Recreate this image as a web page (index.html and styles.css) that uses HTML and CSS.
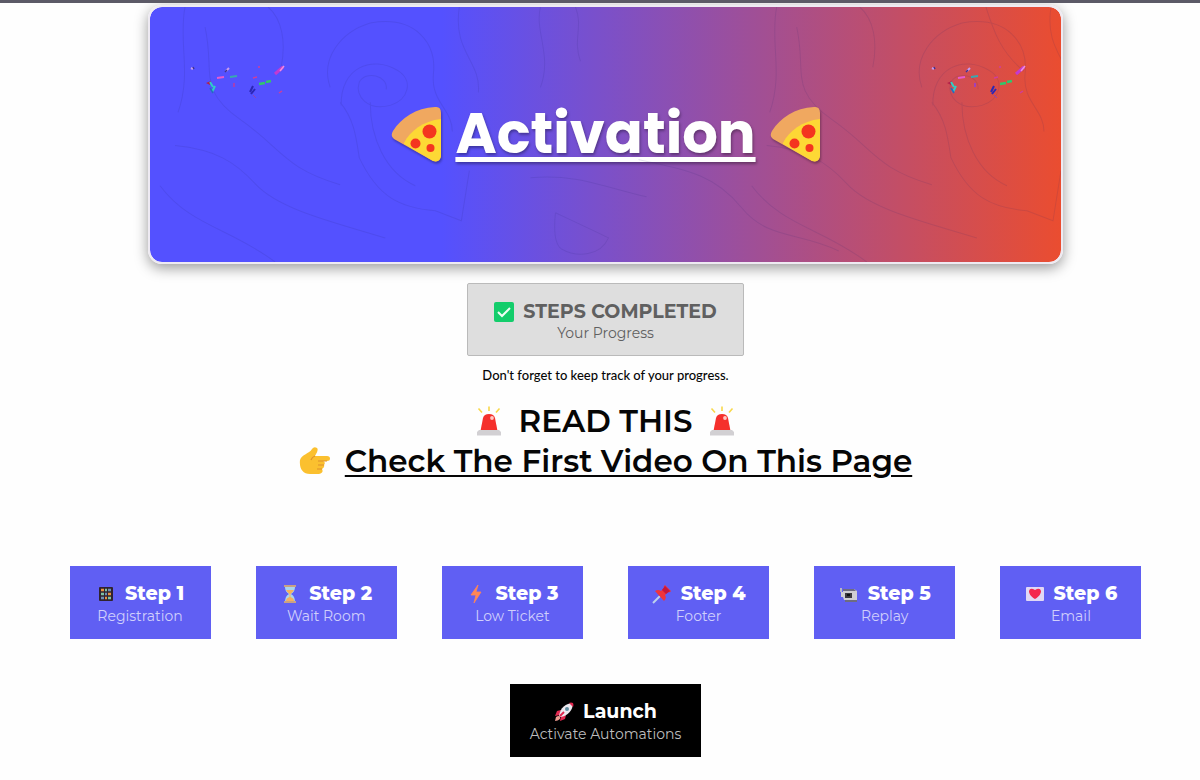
FILE: index.html
```html
<!DOCTYPE html>
<html lang="en">
<head>
	<meta charset="utf-8">
	<title>Activation</title>
	<link rel="stylesheet" href="styles.css">
</head>
<body>
	<!-- Shared drawings -->
	<svg class="defs" aria-hidden="true">
		<symbol id="pizza" viewBox="0 0 50 56">
			<path d="M2 25 C10 12 25 2 44 1 Q50 0 50 7 V50 Q49 57 42 55 L3 33 Q-1 30 2 25Z" fill="#f0a860"/>
			<path d="M13 37 C19 25 32 15 50 13 V50 Q49 57 42 55 L13 38Z" fill="#fdd835"/>
			<circle cx="38.500" cy="25.500" r="7" fill="#f4351f"/>
			<circle cx="24.500" cy="37.500" r="5" fill="#f4351f"/>
			<circle cx="39.500" cy="42" r="4" fill="#f4351f"/>
		</symbol>
		<symbol id="siren" viewBox="0 0 24 30">
			<path d="M1.500 2.500 L5 6.500 M12 0.500 V5 M22.500 2.500 L19 6.500" stroke="#f8d84a" stroke-width="1.600"/>
			<path d="M3.500 25 L6 12 Q7 8 12 8 Q17 8 18 12 L20.500 25Z" fill="#f5302c"/>
			<circle cx="15" cy="12" r="1.900" fill="#ffc7c2"/>
			<path d="M2 24 H22 L24 26 V29.500 H0 V26Z" fill="#d2d0d3"/>
		</symbol>
		<symbol id="confetti" viewBox="0 0 100 40">
			<path d="M3 3 l2 1 M38 6 l3 -3" stroke="#c79bf0" stroke-width="2"/>
			<path d="M5 2 l1 2 M37 7 l2 -2" stroke="#403290" stroke-width="1.500"/>
			<path d="M18 18 l5 -2 l-1 4z" fill="#b3204a"/>
			<path d="M22 17 l3 5 M24 27 l3 -6" stroke="#2fcfc6" stroke-width="2"/>
			<path d="M22 23 l3 5" stroke="#256bc0" stroke-width="1.500"/>
			<path d="M29 13 l7 -1" stroke="#e75ad0" stroke-width="2"/>
			<path d="M42 12 l7 -1" stroke="#38a9b0" stroke-width="2"/>
			<path d="M46 18 v4" stroke="#a33fb8" stroke-width="2"/>
			<path d="M62 27 l3 -6 M63 29 l4 -5" stroke="#2b26b5" stroke-width="2"/>
			<path d="M65 30 l3 3" stroke="#8b45b5" stroke-width="1"/>
			<path d="M65 13 l4 -1 M71 1 v2 M91 28 l3 -2" stroke="#d03e9a" stroke-width="1.500"/>
			<path d="M71 19 l6 -1 M78 17 l5 -1" stroke="#32c66b" stroke-width="2.500"/>
			<path d="M87 9 l8 -7" stroke="#c23ad2" stroke-width="3"/>
			<path d="M92 6 l4 -5" stroke="#f08ce0" stroke-width="1.500"/>
		</symbol>
	</svg>

	<main class="page">
		<header class="banner">
			<svg class="contours" viewBox="0 0 910 254" preserveAspectRatio="none" aria-hidden="true">
				<g id="lines">
					<path d="M35 0 C28 35 42 65 28 105"/>
					<path d="M10 178 C40 218 80 220 125 254"/>
					<path d="M25 138 C65 142 85 154 105 176 S165 210 235 230"/>
					<path d="M118 0 C132 12 136 35 131 60"/>
					<path d="M191 98 C190 60 222 48 247 63 C264 73 258 93 240 98 C218 104 204 89 209 75 C215 63 238 68 236 82"/>
					<path d="M190 95 C204 112 206 130 209 150 C228 190 250 200 285 203 L311 213 L319 163"/>
					<path d="M220 95 C220 130 235 165 265 178"/>
					<path d="M180 80 C170 52 190 25 220 16 C265 8 287 36 283 68 C281 95 302 102 302 124"/>
					<path d="M55 20 C65 65 47 82 90 112 S133 160 190 177"/>
					<path d="M309 0 C302 45 331 54 328 85"/>
					<path d="M405 205 C420 212 448 225 458 230 C450 248 427 250 411 241 Q402 235 405 205"/>
				</g>
				<use href="#lines" x="591"/>
				<path d="M488 152 C540 163 565 168 591 200 S650 224 688 243"/>
				<path d="M390 0 C384 25 402 48 390 80 M425 0 C433 20 422 32 430 54"/>
				<path d="M380 170 C430 166 453 180 496 189"/>
				<path d="M835 0 C843 25 850 45 873 64"/>
			</svg>
			<svg class="confetti confetti-left" aria-hidden="true"><use href="#confetti"/></svg>
			<svg class="confetti confetti-right" aria-hidden="true"><use href="#confetti"/></svg>
			<svg class="pizza" aria-hidden="true"><use href="#pizza"/></svg>
			<h1>Activation</h1>
			<svg class="pizza" aria-hidden="true"><use href="#pizza"/></svg>
		</header>

		<button class="btn progress" type="button">
			<span class="btn-title">
				<svg class="icon" viewBox="0 0 20 20" aria-hidden="true">
					<rect width="20" height="20" rx="2" fill="#13cd6b"/>
					<path d="M4 10 L8 14 L16 6" fill="none" stroke="#effff5" stroke-width="2"/>
				</svg>
				STEPS COMPLETED
			</span>
			<span class="btn-sub">Your Progress</span>
		</button>
		<p class="note">Don't forget to keep track of your progress.</p>

		<h2 class="notice">
			<span class="notice-line notice-read">
				<svg class="siren" aria-hidden="true"><use href="#siren"/></svg>
				<span>READ THIS</span>
				<svg class="siren" aria-hidden="true"><use href="#siren"/></svg>
			</span>
			<span class="notice-line">
				<svg class="hand" viewBox="0 0 32 28" aria-hidden="true">
					<path d="M1 13 C3 7 10 7 13 2 Q15 -1 18 1 Q20 3 16 9 H28 Q31 9 31 11.500 Q31 14 28 14 H24 Q27 15 25 18 Q26 20 23 22 Q25 26 20 27 H13 C4 28 0 22 1 13Z" fill="#fbc02f"/>
					<path d="M16 9 Q13 10 12 13 M28 14 H19 M25 18 H19 M23 22 H18" fill="none" stroke="#dd902e" stroke-width="1.200"/>
				</svg>
				<a href="#video">Check The First Video On This Page</a>
			</span>
		</h2>

		<div class="steps">
			<button class="btn step" type="button">
				<span class="btn-title">
					<svg class="icon" viewBox="0 0 20 20" aria-hidden="true">
						<rect x="3" y="3" width="14" height="14" rx="1" fill="#30232e"/>
						<path d="M5 6 h3 M12 10 h3 M9 14 h2" stroke="#ec9340" stroke-width="2.500"/>
						<path d="M9 6 h2 M5 10 h3 M12 14 h3" stroke="#7fc4a2" stroke-width="2.500"/>
						<path d="M12 6 h3 M9 10 h2 M5 14 h3" stroke="#6f8fb5" stroke-width="2.500"/>
					</svg>
					Step 1
				</span>
				<span class="btn-sub">Registration</span>
			</button>
			<button class="btn step" type="button">
				<span class="btn-title">
					<svg class="icon" viewBox="0 0 20 20" aria-hidden="true">
						<path d="M5 3 H15 Q15 8 11 10 Q15 12 15 18 H5 Q5 12 9 10 Q5 8 5 3Z" fill="#a8d4ee"/>
						<path d="M6 6 H14 Q13 8 10.500 10 V13 Q14 14 14 17 H6 Q6 14 9.500 13 V10 Q7 8 6 6Z" fill="#f5b25d"/>
						<path d="M4 2 H16 M4 18 H16" stroke="#c8a184" stroke-width="2"/>
					</svg>
					Step 2
				</span>
				<span class="btn-sub">Wait Room</span>
			</button>
			<button class="btn step" type="button">
				<span class="btn-title">
					<svg class="icon" viewBox="0 0 20 20" aria-hidden="true">
						<path d="M12 1 L5 11 H10 L8 19 L15 8 H10Z" fill="#ff8655" stroke="#ff8655" stroke-width="0.800"/>
					</svg>
					Step 3
				</span>
				<span class="btn-sub">Low Ticket</span>
			</button>
			<button class="btn step" type="button">
				<span class="btn-title">
					<svg class="icon" viewBox="0 0 20 20" aria-hidden="true">
						<path d="M1 19 L8 12" stroke="#bdd1ed" stroke-width="2"/>
						<path d="M3 7 Q6 5 9 7 L12 4 Q11 2 13 1 L19 7 Q18 9 16 8 L13 11 Q15 14 12 17Z" fill="#ef343c"/>
						<path d="M10 6 L14 10 L18 7 L13 2Z" fill="#c6163d"/>
					</svg>
					Step 4
				</span>
				<span class="btn-sub">Footer</span>
			</button>
			<button class="btn step" type="button">
				<span class="btn-title">
					<svg class="icon" viewBox="0 0 20 20" aria-hidden="true">
						<path d="M2 4 V8" stroke="#b8b6c8" stroke-width="2"/>
						<path d="M4 5 H15 L18 7 V16 H5 L4 13 H2 V8 H4Z" fill="#d0ced3"/>
						<path d="M4 5 H15 L17 7 H4Z M6 16 H18 V18 H6Z" fill="#6e6c80"/>
						<rect x="6" y="9" width="7" height="5" fill="#3c3940"/>
						<rect x="8" y="10" width="3" height="2" fill="#111"/>
					</svg>
					Step 5
				</span>
				<span class="btn-sub">Replay</span>
			</button>
			<button class="btn step" type="button">
				<span class="btn-title">
					<svg class="icon" viewBox="0 0 20 20" aria-hidden="true">
						<rect x="1" y="3" width="18" height="14" rx="1" fill="#e1d8f5"/>
						<path d="M10 15 C5 12 4 9 4 7 Q5 3 10 6 Q15 3 16 7 C16 9 15 12 10 15Z" fill="#f4264f"/>
					</svg>
					Step 6
				</span>
				<span class="btn-sub">Email</span>
			</button>
		</div>

		<button class="btn launch" type="button">
			<span class="btn-title">
				<svg class="icon" viewBox="0 0 20 20" aria-hidden="true">
					<path d="M7 8 L3 9 L1 14 L6 13 M12 13 L11 17 L6 19 L7 14" fill="#e22950"/>
					<path d="M5 14 C6 6 12 1 19 1 C19 8 14 14 6 15Z" fill="#ece9ef"/>
					<path d="M15 1 Q17 0 19 1 Q20 3 19 5Z" fill="#df284f"/>
					<circle cx="13" cy="7" r="2" fill="#608da0"/>
					<path d="M1 19 L2 15 Q5 13 6 15 Q7 18 1 19Z" fill="#ef9b91"/>
					<path d="M6 14 L10 10" stroke="#df284f" stroke-width="2"/>
				</svg>
				Launch
			</span>
			<span class="btn-sub">Activate Automations</span>
		</button>
	</main>
</body>
</html>
```
FILE: styles.css
```css
body {
	margin: 0;
	background-color: #fefefe;
	border-top: 3px solid #5c5a67;
	color: #060606;
	font-family: Montserrat, Inter, sans-serif;
}

.defs {
	position: absolute;
	width: 0;
	height: 0;
}

.page {
	display: flex;
	flex-direction: column;
	align-items: center;
	padding: 2px 36px 24px 47px;
}

.banner {
	position: relative;
	display: flex;
	align-items: center;
	justify-content: center;
	gap: 14px;
	box-sizing: border-box;
	width: 100%;
	max-width: 915px;
	height: 259px;
	padding-bottom: 2px;
	border: 2px solid #eeeaf2;
	border-radius: 14px;
	background: linear-gradient(90deg, #5451ff 32%, #ea4d30 100%);
	background-clip: padding-box;
	box-shadow: 0 4px 14px rgba(0, 0, 0, 0.4);
}

.banner h1 {
	margin: 0;
	color: #fff;
	font-family: Poppins, Inter, sans-serif;
	font-size: 56px;
	font-weight: 700;
	line-height: 82px;
	text-decoration: underline;
	text-decoration-thickness: 5px;
	text-underline-offset: 4px;
	text-shadow: 1px 2px 3px rgba(0, 0, 0, 0.35);
}

.pizza {
	width: 50px;
	height: 56px;
	filter: drop-shadow(1px 2px 1px rgba(0, 0, 0, 0.3));
}

.contours {
	position: absolute;
	top: 0;
	left: 0;
	width: 100%;
	height: 100%;
	fill: none;
	stroke: #20206a;
	stroke-width: 1;
	opacity: 0.11;
}

.confetti {
	position: absolute;
	top: 58px;
	width: 100px;
	height: 40px;
}

.confetti-left {
	left: 38px;
}

.confetti-right {
	right: 32px;
}

.btn {
	display: flex;
	flex-direction: column;
	align-items: center;
	box-sizing: border-box;
	padding: 16px 20px 13px;
	border: none;
	font-family: inherit;
	white-space: nowrap;
	cursor: pointer;
}

.btn-title {
	display: flex;
	align-items: center;
	gap: 9px;
	font-size: 19px;
	font-weight: 700;
	line-height: 24px;
}

.btn-sub {
	font-size: 14px;
	line-height: 20px;
}

.icon {
	width: 20px;
	height: 20px;
}

.progress {
	margin-top: 19px;
	padding: 17px 26px 12px;
	border: 1px solid #bababa;
	border-radius: 2px;
	background-color: #dedede;
	color: #606060;
}

.progress .btn-title {
	line-height: 22px;
}

.note {
	margin: 9px 0 0;
	font-family: Lato, sans-serif;
	font-size: 13px;
	font-weight: 500;
	line-height: 20px;
}

.notice {
	margin: 16px 0 0;
	font-size: 31px;
	font-weight: 600;
	line-height: 40px;
}

.notice-line {
	display: flex;
	align-items: center;
	justify-content: center;
	gap: 14px;
}

.notice-read {
	gap: 18px;
}

.notice a {
	color: inherit;
	text-decoration: underline;
	text-decoration-thickness: 2px;
	text-underline-offset: 3px;
}

.siren {
	width: 24px;
	height: 30px;
}

.hand {
	width: 32px;
	height: 28px;
}

.steps {
	display: grid;
	grid-template-columns: repeat(6, 1fr);
	justify-items: center;
	width: 100%;
	margin-top: 85px;
}

.step {
	min-width: 141px;
	background-color: #605ff3;
	color: #fff;
}

.step .btn-title {
	font-weight: 800;
}

.step .btn-sub {
	color: #d0cffc;
}

.launch {
	margin-top: 45px;
	background-color: #000;
	color: #fff;
}

.launch .btn-sub {
	color: #bdbdbd;
}
```
